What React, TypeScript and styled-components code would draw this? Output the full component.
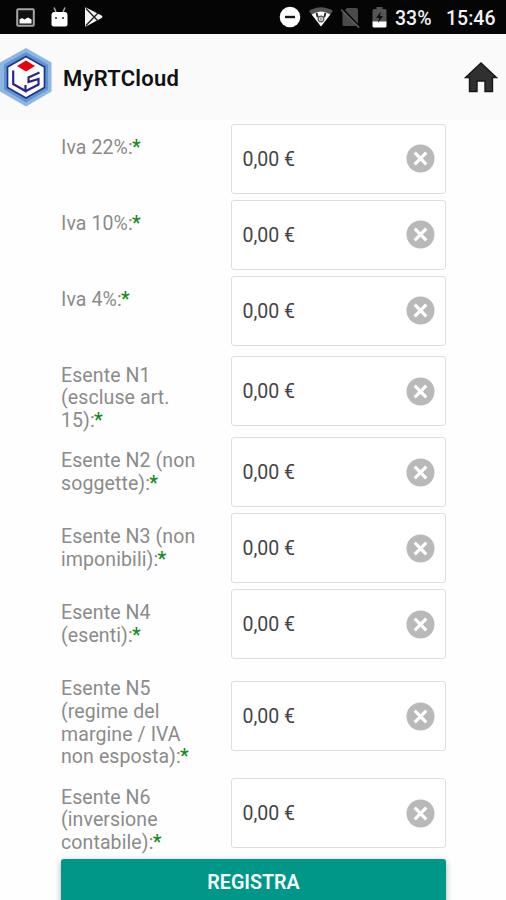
import React from 'react';
import styled, { createGlobalStyle } from 'styled-components';

const GlobalStyle = createGlobalStyle`
  * { box-sizing: border-box; }
  html, body { margin: 0; padding: 0; background: #fff; overflow: hidden; }
  body { font-family: Roboto, "Liberation Sans", sans-serif; }
  svg { display: block; flex: none; }
`;

const Screen = styled.div`
  width: 506px;
  height: 900px;
  overflow: hidden;
  display: flex;
  flex-direction: column;
  background: #fefefe;
`;

const StatusBar = styled.header`
  flex: none;
  height: 34px;
  background: #050505;
  display: flex;
  align-items: center;
  justify-content: space-between;
  padding: 0 11px 0 16px;
`;

const StatusGroup = styled.div`
  display: flex;
  align-items: center;
`;

const StatusText = styled.span<{ $width: number; $gap: number }>`
  width: ${(p) => p.$width}px;
  margin-left: ${(p) => p.$gap}px;
  padding-top: 3px;
  color: #f1f1f1;
  font-size: 19.5px;
  line-height: 22px;
  font-weight: 500;
  white-space: nowrap;
`;

const Gap = styled.span<{ $size: number }>`
  flex: none;
  width: ${(p) => p.$size}px;
`;

const AppBar = styled.div`
  flex: none;
  height: 86px;
  background: #fafafa;
  display: flex;
  align-items: center;
  padding: 0 8px 0 0;
`;

const Title = styled.h1`
  flex: 1;
  margin: 3px 0 0 11px;
  color: #111;
  font-size: 22px;
  line-height: 26px;
  font-weight: 600;
  letter-spacing: 0.25px;
`;

const Form = styled.main`
  flex: 1;
  min-height: 0;
  padding: 0.7px 60px 0 61px;
`;

const Row = styled.div`
  display: flex;
  align-items: center;
  min-height: 76px;
`;

const Label = styled.label`
  width: 170px;
  flex: none;
  align-self: flex-start;
  padding: 16.1px 0 1.7px;
  color: #8b8b8b;
  font-size: 19.5px;
  line-height: 22.6px;
  letter-spacing: 0.1px;
  white-space: pre-line;
`;

const Required = styled.span`
  margin-left: -0.8px;
  color: #138a1c;
  font-weight: 500;
`;

const Field = styled.div`
  width: 215px;
  height: 70px;
  border: 1.5px solid #dedede;
  border-radius: 3px;
  background: #fff;
  display: flex;
  align-items: center;
  justify-content: space-between;
  padding: 0 10px 0 10.5px;
`;

const Amount = styled.span`
  padding-top: 2px;
  color: #444;
  font-size: 19.5px;
  line-height: 24px;
`;

const Submit = styled.button`
  display: block;
  width: 385px;
  height: 54px;
  margin: 2.7px 0 0;
  padding: 0 0 5px;
  border: 0;
  border-radius: 3px;
  background: #009688;
  box-shadow: 0 2px 6px rgba(0, 0, 0, 0.32);
  color: #f5fffd;
  font: 600 19.7px/24px Roboto, "Liberation Sans", sans-serif;
`;

const PictureIcon = () => (
  <svg width="19" height="19" viewBox="0 0 19 19">
    <rect x="1.2" y="1.2" width="16.6" height="16.6" rx="1" fill="#111" stroke="#a5a5a5" strokeWidth="2" />
    <path d="M3.5 15.5V11.5L6 10l2.5 1.5L12 9.5l3.5 2v4z" fill="#fff" />
  </svg>
);

const AndroidIcon = () => (
  <svg width="17" height="20" viewBox="0 0 17 20">
    <path d="M3 0.5L5 5M14 0.5L12 5" stroke="#aaa" strokeWidth="1.5" />
    <path d="M.5 8Q.5 5 3.5 5h10q3 0 3 3v9.5q0 2-2 2h-12q-2 0-2-2z" fill="#fff" />
    <circle cx="5" cy="11" r="1" fill="#222" />
    <circle cx="12" cy="11" r="1" fill="#222" />
  </svg>
);

const PlayIcon = () => (
  <svg width="19" height="20" viewBox="0 0 19 20">
    <path d="M1 1.3Q1 0 2.5.8L17.6 8.6q1.6 1.2 0 2.5L2.5 19.2Q1 20 1 18.5z" fill="#f4f4f4" />
    <path d="M2 1.5L14 14M2 18.5L14 6" stroke="#222" strokeWidth="1.4" />
  </svg>
);

const DoNotDisturbIcon = () => (
  <svg width="22" height="22" viewBox="0 0 22 22">
    <circle cx="11" cy="11" r="10.3" fill="#fff" />
    <path d="M6 11h10" stroke="#151515" strokeWidth="2.4" />
  </svg>
);

const WifiIcon = () => (
  <svg width="24" height="20" viewBox="0 0 24 20">
    <path d="M0 4Q12-3.5 24 4L12 19.5z" fill="#555" />
    <path d="M2.7 7.5Q12 1.5 21.3 7.5L12 19.5z" fill="#fff" />
    <path d="M7.5 5.8l1.2 4.5M16.5 5.8l-1.2 4.5" stroke="#222" strokeWidth="1.8" />
    <circle cx="12" cy="12" r="2.8" fill="#ddd" stroke="#555" strokeWidth="1.2" />
    <path d="M12 10.5v3" stroke="#666" />
  </svg>
);

const NoSimIcon = () => (
  <svg width="19" height="21" viewBox="0 0 19 21">
    <path d="M6 1h9q2 0 2 2v16H3q-1.5 0-1.5-1.5V5.5z" fill="#4b4b4b" />
    <path d="M0 .5L18 19.7" stroke="#050505" strokeWidth="2.5" />
    <path d="M0 2.5L18 20.6" stroke="#606060" strokeWidth="1.5" />
  </svg>
);

const BatteryIcon = () => (
  <svg width="15" height="21" viewBox="0 0 15 21">
    <path d="M4.5 0h6v2H13q1.5 0 1.5 1.5V15H.5V3.5Q.5 2 2 2h2.5z" fill="#545454" />
    <path d="M.5 14.5h14V19q0 1.5-1.5 1.5H2Q.5 20.5 .5 19z" fill="#fff" />
    <path d="M9 4.5L4 11h3.2L6 16l5-7H8z" fill="#111" />
  </svg>
);

const LogoIcon = () => (
  <svg width="52" height="60" viewBox="0 0 52 60">
    <path d="M26 1L51.5 15.5v29L26 59.5L0 44.5v-29z" fill="#8fb6e2" />
    <path d="M26 5L48 17.5v25L26 55.5L4 42.5v-25z" fill="#5f94d2" />
    <path d="M26 9.5L44.5 20v20.5L26 51L7.5 40.5V20z" fill="#fff" stroke="#20328b" strokeWidth="1.7" />
    <path d="M26 13.5L35 19l-9 5.5L17 19z" fill="#e9000c" />
    <path d="M13.2 23.5v13.5L25.5 44V38" fill="none" stroke="#27278b" strokeWidth="2.2" />
    <path d="M39.5 25.5L28.5 30.5v4.500l10-3v5.500L26 44" fill="none" stroke="#27278b" strokeWidth="2.2" />
  </svg>
);

const HomeIcon = () => (
  <svg width="34" height="31" viewBox="0 0 34 31">
    <path d="M17 1L32.5 15.5H28.5V29.5H21V19h-8v10.5H5.5v-14H1.5z" fill="#303030" stroke="#171717" strokeWidth="1.4" />
  </svg>
);

const ClearIcon = () => (
  <svg width="29" height="29" viewBox="0 0 29 29">
    <circle cx="14.5" cy="14.5" r="14" fill="#b9b9b9" />
    <path d="M8.7 8.7l11.6 11.6M20.3 8.7L8.7 20.3" stroke="#fff" strokeWidth="3.2" />
  </svg>
);

const entries = [
  'Iva 22%:',
  'Iva 10%:',
  'Iva 4%:',
  'Esente N1\n(escluse art.\n15):',
  'Esente N2 (non\nsoggette):',
  'Esente N3 (non\nimponibili):',
  'Esente N4\n(esenti):',
  'Esente N5\n(regime del\nmargine / IVA\nnon esposta):',
  'Esente N6\n(inversione\ncontabile):',
];

export default function App() {
  return (
    <Screen>
      <GlobalStyle />
      <StatusBar>
        <StatusGroup>
          <PictureIcon />
          <Gap $size={16} />
          <AndroidIcon />
          <Gap $size={16} />
          <PlayIcon />
        </StatusGroup>
        <StatusGroup>
          <DoNotDisturbIcon />
          <Gap $size={8} />
          <WifiIcon />
          <Gap $size={8} />
          <NoSimIcon />
          <Gap $size={12} />
          <BatteryIcon />
          <StatusText $width={38} $gap={8}>33%</StatusText>
          <StatusText $width={49} $gap={13}>15:46</StatusText>
        </StatusGroup>
      </StatusBar>
      <AppBar>
        <LogoIcon />
        <Title>MyRTCloud</Title>
        <HomeIcon />
      </AppBar>
      <Form>
        {entries.map((text) => (
          <Row key={text}>
            <Label>
              {text}
              <Required>*</Required>
            </Label>
            <Field>
              <Amount>0,00 €</Amount>
              <ClearIcon />
            </Field>
          </Row>
        ))}
        <Submit>REGISTRA</Submit>
      </Form>
    </Screen>
  );
}
